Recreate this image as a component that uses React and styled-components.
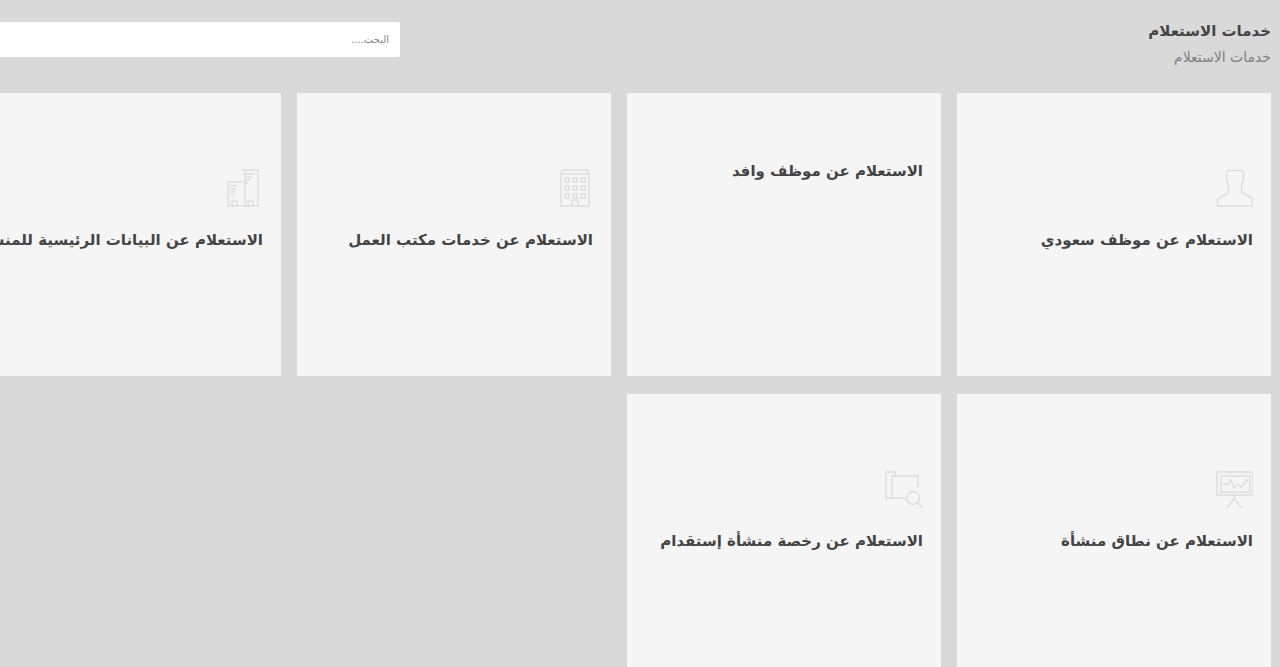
import React from 'react';
import styled, { createGlobalStyle } from 'styled-components';

const Global = createGlobalStyle`
  html, body {
    margin: 0;
    height: 100%;
    overflow: hidden;
    direction: rtl;
    background-color: #d9d9d9;
    font-family: "DejaVu Sans", "Noto Sans", sans-serif;
  }
`;

const Page = styled.main`
  width: 1304px;
  margin-right: 9px;
`;

const Header = styled.header`
  display: flex;
  justify-content: space-between;
  align-items: flex-start;
  padding-top: 22px;
  height: 71px;
`;

const TitleBlock = styled.div`
  display: flex;
  flex-direction: column;
  gap: 8px;
`;

const Title = styled.h1`
  margin: 0;
  font-size: 15px;
  line-height: 18px;
  font-weight: 700;
  color: #444;
`;

const Crumb = styled.span`
  font-size: 14px;
  line-height: 18px;
  color: #808080;
`;

const Search = styled.input`
  box-sizing: border-box;
  width: 433px;
  height: 35px;
  padding: 0 11px;
  border: none;
  border-radius: 2px;
  background-color: #fff;
  font-family: inherit;
  font-size: 10px;
  &::placeholder {
    color: #888;
    opacity: 1;
  }
`;

const Grid = styled.section`
  display: grid;
  grid-template-columns: repeat(4, 314px);
  grid-auto-rows: 283px;
  column-gap: 16px;
  row-gap: 18px;
`;

const Card = styled.a`
  display: flex;
  flex-direction: column;
  align-items: flex-start;
  box-sizing: border-box;
  padding: 68px 18px 0;
  background-color: #f5f5f5;
  color: #444;
`;

const IconSlot = styled.svg`
  display: block;
  width: 40px;
  height: 40px;
  margin: 8px 0 21px;
  fill: none;
  stroke: #dddddd;
  stroke-width: 1.4;
`;

const CardTitle = styled.h2`
  margin: 0;
  font-size: 15px;
  line-height: 20px;
  font-weight: 700;
  white-space: nowrap;
`;

const UserIcon = () => (
  <IconSlot viewBox="0 0 40 40">
    <path d="M16 1.500h12c1.500 0 2.500 1 2.500 2.500v7c0 2-2 3-2 5v5c0 2 1 3 3 4l5 2.500c2 1 3 2 3 4v5.500H4.500V32c0-2 1-3 3-4l5-2.500c2-1 3-2 3-4v-5c0-2-2-3-2-5V4c0-1.500 1-2.500 2.500-2.500z" />
  </IconSlot>
);

const BuildingIcon = () => (
  <IconSlot viewBox="0 0 40 40">
    <path d="M8 37V4l2-3h24l2 3v33zM8 5h28" />
    <path d="M12 9h4v4h-4zM20 9h4v4h-4zM28 9h4v4h-4zM12 17h4v4h-4zM20 17h4v4h-4zM28 17h4v4h-4zM12 25h4v4h-4zM20 25h4v4h-4zM28 25h4v4h-4zM19 37v-6h6v6" />
  </IconSlot>
);

const BuildingsIcon = () => (
  <IconSlot viewBox="0 0 40 40">
    <path d="M5 37V13h17v24zM22 1h13v36H22M19 1h3v12" />
    <path d="M7 17h7M7 20h6M7 23h5M7 26h4M22 5h9M22 8h7M22 11h5M22 14h3M9 37v-5h5v5M25 37v-5h5v5" />
  </IconSlot>
);

const ChartIcon = () => (
  <IconSlot viewBox="0 0 40 40">
    <path d="M4 2h36v23H4zM8 6h29v16H8z" />
    <path d="M10 14h5l3-4 3 8 4-4 3 3 7-8M21 25v4M21 29l-7 9M21 29l8 9" />
  </IconSlot>
);

const FolderIcon = () => (
  <IconSlot viewBox="0 0 40 40">
    <path d="M3 28V2h9v4h23v11M9 28V6h3M3 28h19" />
    <circle cx="30" cy="28" r="6.500" />
    <path d="M35 33l5 5" />
  </IconSlot>
);

const services = [
  { title: 'الاستعلام عن موظف سعودي', Icon: UserIcon },
  { title: 'الاستعلام عن موظف وافد' },
  { title: 'الاستعلام عن خدمات مكتب العمل', Icon: BuildingIcon },
  { title: 'الاستعلام عن البيانات الرئيسية للمنشأة', Icon: BuildingsIcon },
  { title: 'الاستعلام عن نطاق منشأة', Icon: ChartIcon },
  { title: 'الاستعلام عن رخصة منشأة إستقدام', Icon: FolderIcon },
];

export default function App() {
  return (
    <>
      <Global />
      <Page>
        <Header>
          <TitleBlock>
            <Title>خدمات الاستعلام</Title>
            <Crumb>خدمات الاستعلام</Crumb>
          </TitleBlock>
          <Search placeholder="البحث...." />
        </Header>
        <Grid>
          {services.map(({ title, Icon }) => (
            <Card key={title}>
              {Icon && <Icon />}
              <CardTitle>{title}</CardTitle>
            </Card>
          ))}
        </Grid>
      </Page>
    </>
  );
}
